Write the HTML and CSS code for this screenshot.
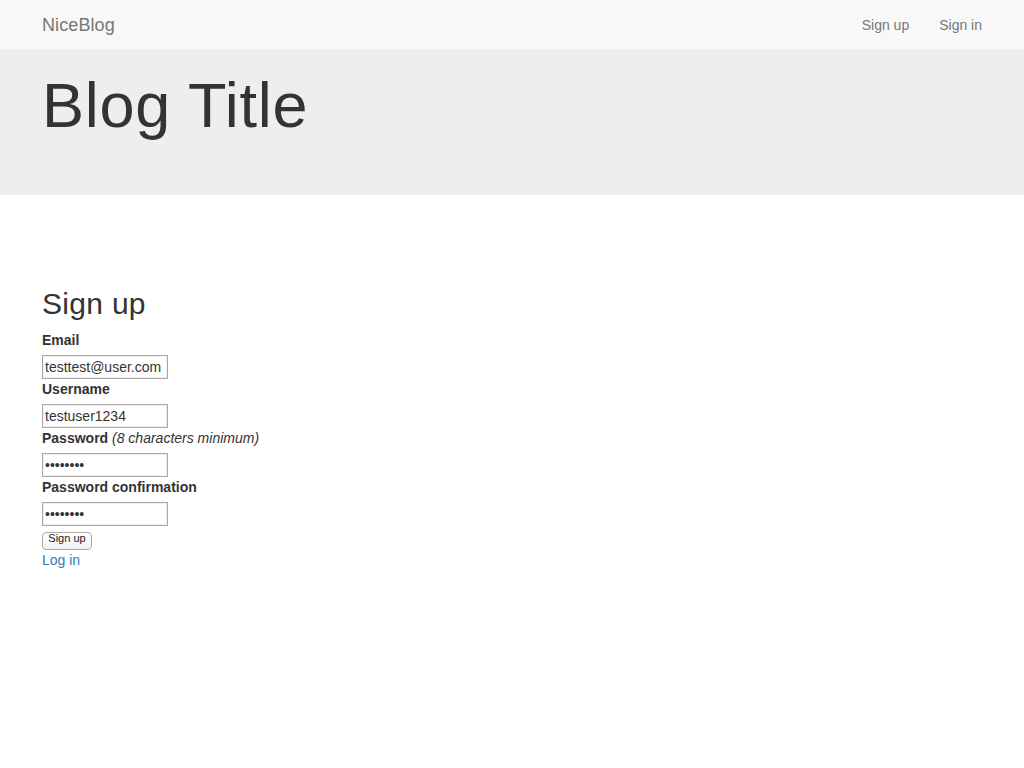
FILE: index.html
```html
<!DOCTYPE html>
<html>
<head>
<meta charset="utf-8">
<link rel="stylesheet" href="styles.css">
</head>
<body>
<nav class="navbar">
  <div class="container nav-inner">
    <a class="brand" href="#">NiceBlog</a>
    <ul class="nav-links">
      <li><a href="#">Sign up</a></li>
      <li><a href="#">Sign in</a></li>
    </ul>
  </div>
</nav>
<div class="jumbotron">
  <div class="container">
    <h1>Blog Title</h1>
  </div>
</div>
<main class="container main">
  <h2>Sign up</h2>
  <form class="form">
    <label>Email</label>
    <input type="text" value="testtest@user.com">
    <label>Username</label>
    <input type="text" value="testuser1234">
    <label>Password <em>(8 characters minimum)</em></label>
    <input type="password" value="password">
    <label>Password confirmation</label>
    <input type="password" value="password">
    <button type="button" class="btn">Sign up</button>
  </form>
  <a class="login" href="#">Log in</a>
</main>
</body>
</html>
```
FILE: styles.css
```css
* { box-sizing: border-box; }
html, body { margin: 0; padding: 0; }
body {
  font-family: "Liberation Sans", Arial, sans-serif;
  font-size: 14px;
  line-height: 20px;
  color: #333;
  background: #fff;
}
a { text-decoration: none; }
.container {
  width: 970px;
  margin: 0 auto;
  padding: 0 15px;
}
.navbar {
  height: 51px;
  background: #f8f8f8;
  border-bottom: 1px solid #e7e7e7;
}
.nav-inner {
  display: flex;
  justify-content: space-between;
  align-items: center;
  height: 50px;
}
.brand {
  font-size: 18px;
  line-height: 20px;
  color: #777;
  letter-spacing: 0.1px;
}
.nav-links {
  display: flex;
  list-style: none;
  margin: 0 -15px 0 0;
  padding: 0;
}
.nav-links a {
  display: block;
  padding: 15px;
  color: #777;
  line-height: 20px;
}
.jumbotron {
  background: #eee;
  height: 144px;
  padding-top: 20px;
}
.jumbotron h1 {
  margin: 0;
  font-size: 63px;
  line-height: 69px;
  font-weight: 400;
  letter-spacing: 0.7px;
}
.main {
  padding-top: 92px;
}
h2 {
  margin: 0 0 10px;
  font-size: 30px;
  line-height: 33px;
  font-weight: 400;
  letter-spacing: 0.3px;
}
.form {
  display: flex;
  flex-direction: column;
  align-items: flex-start;
}
label {
  font-weight: 700;
  line-height: 20px;
  margin-bottom: 5px;
}
label em { font-weight: 400; }
input {
  width: 126px;
  height: 24px;
  border: 1px solid #a9a9a9;
  box-shadow: inset 0 0 0 1px #f0f0f0;
  padding: 1px 2px;
  font-family: "Liberation Sans", Arial, sans-serif;
  font-size: 14px;
  color: #333;
}
.btn {
  margin-top: 6px;
  width: 50px;
  height: 18px;
  padding: 0 0 6px;
  font-family: "Liberation Sans", Arial, sans-serif;
  font-size: 11px;
  line-height: 11px;
  color: #222;
  background: linear-gradient(#fff, #f3f3f3);
  border: 1px solid #aaa;
  border-radius: 4px;
}
.login {
  display: block;
  color: #337ab7;
  line-height: 20px;
  width: max-content;
}
```
